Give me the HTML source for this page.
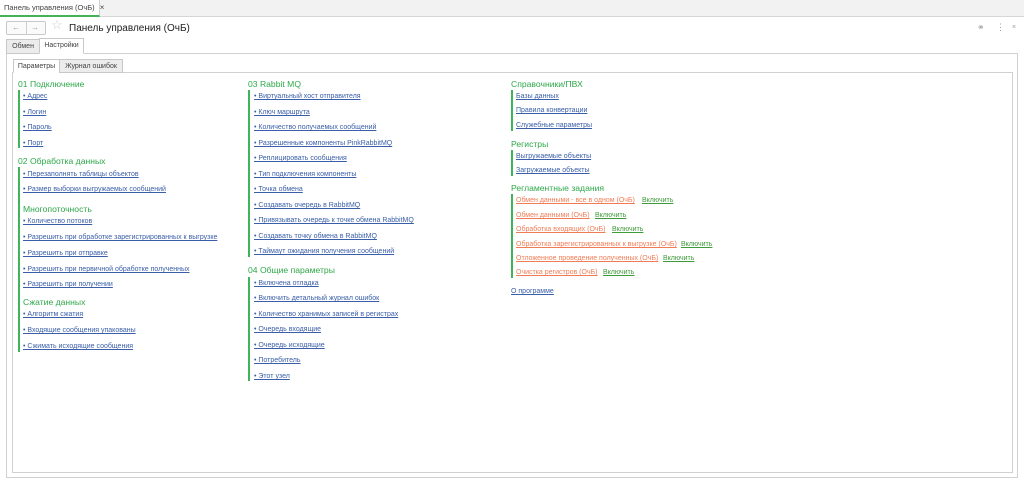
<!DOCTYPE html><html><head><meta charset="utf-8"><style>
*{margin:0;padding:0;box-sizing:border-box}
body{width:1024px;height:483px;background:#fff;position:relative;overflow:hidden;font-family:"Liberation Sans",Arial,sans-serif;color:#333}
.a{position:absolute;white-space:nowrap;line-height:10px}
.h{font-size:8.6px;color:#2ea84a;line-height:12px}
.l{font-size:7px;color:#3a5ea8;text-decoration:underline}
.o{font-size:7px;color:#f07c55;text-decoration:underline}
.g{font-size:7px;color:#3f9a3a;text-decoration:underline}
.v{position:absolute;width:1.5px;background:#3fb45a}
.t{position:absolute;font-size:7px;line-height:13px;text-align:center;color:#444;border:1px solid #c8c8c8}
#c{position:absolute;left:0;top:2px;width:1024px;height:400px}
</style></head><body>
<div style="position:absolute;left:0;top:0;width:1024px;height:17px;background:#f2f2f2;border-bottom:1px solid #d6d6d6"></div>
<div style="position:absolute;left:0;top:0;width:100px;height:17px;background:#fff;border-right:1px solid #d0d0d0;border-bottom:2px solid #43b35b"></div>
<div class="a" style="left:4px;top:3px;font-size:7.5px;color:#444">Панель управления (ОчБ) <span style="font-size:8px;margin-left:3px">×</span></div>
<div style="position:absolute;left:6px;top:21px;width:40px;height:14px;border:1px solid #c8c8c8;border-radius:2px;background:#fafafa"></div>
<div style="position:absolute;left:26px;top:22px;width:1px;height:12px;background:#d0d0d0"></div>
<div class="a" style="left:12px;top:23px;font-size:8px;color:#999">←</div>
<div class="a" style="left:31px;top:23px;font-size:8px;color:#999">→</div>
<div class="a" style="left:51px;top:20px;font-size:13px;color:#ccc">☆</div>
<div class="a" style="left:69px;top:22px;font-size:10px;line-height:13px;color:#222">Панель управления (ОчБ)</div>
<div class="a" style="left:977px;top:22px;font-size:9px;color:#999">⚭</div>
<div class="a" style="left:996px;top:22px;font-size:9px;color:#999">⋮</div>
<div class="a" style="left:1012px;top:23px;font-size:7px;color:#999">×</div>
<div style="position:absolute;left:6px;top:53px;width:1012px;height:425px;border:1px solid #d0d0d0"></div>
<div class="t" style="left:6px;top:39px;width:34px;height:15px;background:#ececec">Обмен</div>
<div class="t" style="left:39px;top:38px;width:45px;height:16px;background:#fff;border-bottom-color:#fff">Настройки</div>
<div style="position:absolute;left:12px;top:72px;width:1001px;height:401px;border:1px solid #d0d0d0"></div>
<div class="t" style="left:13px;top:59px;width:47px;height:14px;background:#fff;border-bottom-color:#fff">Параметры</div>
<div class="t" style="left:59px;top:59px;width:64px;height:14px;background:#ececec">Журнал ошибок</div>
<div id="c">
<div class="a h" style="left:18px;top:76px">01 Подключение</div>
<div class="v" style="left:18px;top:88px;height:58px"></div>
<div class="a l" style="left:23px;top:90px">• Адрес</div>
<div class="a l" style="left:23px;top:106px">• Логин</div>
<div class="a l" style="left:23px;top:121px">• Пароль</div>
<div class="a l" style="left:23px;top:137px">• Порт</div>
<div class="a h" style="left:18px;top:153px">02 Обработка данных</div>
<div class="v" style="left:18px;top:165px;height:185px"></div>
<div class="a l" style="left:23px;top:168px">• Перезаполнять таблицы объектов</div>
<div class="a l" style="left:23px;top:183px">• Размер выборки выгружаемых сообщений</div>
<div class="a h" style="left:23px;top:201px">Многопоточность</div>
<div class="a l" style="left:23px;top:215px">• Количество потоков</div>
<div class="a l" style="left:23px;top:231px">• Разрешить при обработке зарегистрированных к выгрузке</div>
<div class="a l" style="left:23px;top:247px">• Разрешить при отправке</div>
<div class="a l" style="left:23px;top:263px">• Разрешить при первичной обработке полученных</div>
<div class="a l" style="left:23px;top:278px">• Разрешить при получении</div>
<div class="a h" style="left:23px;top:294px">Сжатие данных</div>
<div class="a l" style="left:23px;top:308px">• Алгоритм сжатия</div>
<div class="a l" style="left:23px;top:324px">• Входящие сообщения упакованы</div>
<div class="a l" style="left:23px;top:340px">• Сжимать исходящие сообщения</div>

<div class="a h" style="left:248px;top:76px">03 Rabbit MQ</div>
<div class="v" style="left:248px;top:88px;height:167px"></div>
<div class="a l" style="left:254px;top:90px">• Виртуальный хост отправителя</div>
<div class="a l" style="left:254px;top:106px">• Ключ маршрута</div>
<div class="a l" style="left:254px;top:121px">• Количество получаемых сообщений</div>
<div class="a l" style="left:254px;top:137px">• Разрешенные компоненты PinkRabbitMQ</div>
<div class="a l" style="left:254px;top:152px">• Реплицировать сообщения</div>
<div class="a l" style="left:254px;top:168px">• Тип подключения компоненты</div>
<div class="a l" style="left:254px;top:183px">• Точка обмена</div>
<div class="a l" style="left:254px;top:199px">• Создавать очередь в RabbitMQ</div>
<div class="a l" style="left:254px;top:214px">• Привязывать очередь к точке обмена RabbitMQ</div>
<div class="a l" style="left:254px;top:230px">• Создавать точку обмена в RabbitMQ</div>
<div class="a l" style="left:254px;top:245px">• Таймаут ожидания получения сообщений</div>
<div class="a h" style="left:248px;top:262px">04 Общие параметры</div>
<div class="v" style="left:248px;top:275px;height:104px"></div>
<div class="a l" style="left:254px;top:277px">• Включена отладка</div>
<div class="a l" style="left:254px;top:292px">• Включить детальный журнал ошибок</div>
<div class="a l" style="left:254px;top:308px">• Количество хранимых записей в регистрах</div>
<div class="a l" style="left:254px;top:323px">• Очередь входящие</div>
<div class="a l" style="left:254px;top:339px">• Очередь исходящие</div>
<div class="a l" style="left:254px;top:354px">• Потребитель</div>
<div class="a l" style="left:254px;top:370px">• Этот узел</div>

<div class="a h" style="left:511px;top:76px">Справочники/ПВХ</div>
<div class="v" style="left:511px;top:88px;height:41px"></div>
<div class="a l" style="left:516px;top:90px">Базы данных</div>
<div class="a l" style="left:516px;top:104px">Правила конвертации</div>
<div class="a l" style="left:516px;top:119px">Служебные параметры</div>
<div class="a h" style="left:511px;top:136px">Регистры</div>
<div class="v" style="left:511px;top:148px;height:26px"></div>
<div class="a l" style="left:516px;top:150px">Выгружаемые объекты</div>
<div class="a l" style="left:516px;top:164px">Загружаемые объекты</div>
<div class="a h" style="left:511px;top:180px">Регламентные задания</div>
<div class="v" style="left:511px;top:192px;height:84px"></div>
<div class="a o" style="left:516px;top:194px">Обмен данными - все в одном (ОчБ)</div><div class="a g" style="left:642px;top:194px">Включить</div>
<div class="a o" style="left:516px;top:209px">Обмен данными (ОчБ)</div><div class="a g" style="left:595px;top:209px">Включить</div>
<div class="a o" style="left:516px;top:223px">Обработка входящих (ОчБ)</div><div class="a g" style="left:612px;top:223px">Включить</div>
<div class="a o" style="left:516px;top:238px">Обработка зарегистрированных к выгрузке (ОчБ)</div><div class="a g" style="left:681px;top:238px">Включить</div>
<div class="a o" style="left:516px;top:252px">Отложенное проведение полученных (ОчБ)</div><div class="a g" style="left:663px;top:252px">Включить</div>
<div class="a o" style="left:516px;top:266px">Очистка регистров (ОчБ)</div><div class="a g" style="left:603px;top:266px">Включить</div>
<div class="a l" style="left:511px;top:285px">О программе</div>
</div>
</body></html>
